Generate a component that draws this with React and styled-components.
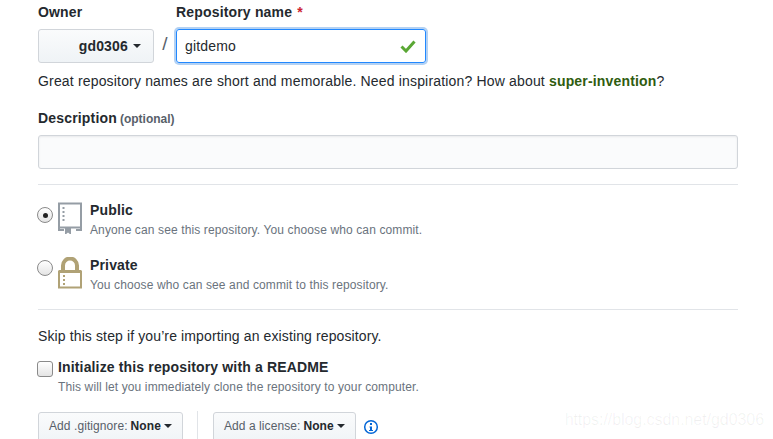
import React from "react"
import styled, { createGlobalStyle } from "styled-components"

const Global = createGlobalStyle`
html, body { margin: 0; padding: 0; background: #fff; overflow: hidden; }
body { font-family: "Liberation Sans", Arial, sans-serif; font-size: 14px; color: #24292e; letter-spacing: 0.17px; }
`
const Page = styled.div`
position: relative;
width: 773px;
height: 439px;
overflow: hidden;
box-sizing: border-box;
padding: 4px 35px 0 38px;
`
const OwnerRow = styled.div`
display: flex;
align-items: flex-start;
`
const Field = styled.div`
display: flex;
flex-direction: column;
gap: 8px;
`
const Label = styled.label`
font-weight: 700;
font-size: 14px;
line-height: 17px;
color: #24292e;
small { font-size: 12px; color: #586069; letter-spacing: 0; margin-left: -1px; }
`
const Star = styled.span`
color: #cb2431;
margin-left: 1px;
`
const OwnerButton = styled.div`
box-sizing: border-box;
width: 116px;
height: 34px;
display: flex;
align-items: center;
justify-content: flex-end;
padding-right: 12px;
gap: 5px;
font-weight: 700;
border: 1px solid #d1d5da;
border-radius: 3px;
background: linear-gradient(#fafbfc, #eff3f6);
`
const Caret = styled.span`
display: inline-block;
width: 0;
height: 0;
border: 4px solid transparent;
border-top-color: #24292e;
border-bottom: 0;
`
const Slash = styled.span`
width: 22px;
text-align: center;
font-size: 19px;
line-height: 29px;
margin-top: 25px;
color: #586069;
font-weight: 400;
`
const NameInput = styled.div`
box-sizing: border-box;
width: 250px;
height: 34px;
display: flex;
align-items: center;
justify-content: space-between;
padding: 0 9px 0 8px;
border: 1px solid #2188ff;
border-radius: 3px;
box-shadow: 0 0 0 2px rgba(3, 102, 214, 0.3);
font-size: 14px;
color: #24292e;
`
const Hint = styled.p`
margin: 10px 0 0;
line-height: 17px;
strong { color: #2f5c0f; }
`
const DescriptionLabel = styled(Label)`
display: block;
margin-top: 20px;
`
const DescriptionInput = styled.div`
box-sizing: border-box;
height: 34px;
margin-top: 7px;
border: 1px solid #d1d5da;
border-radius: 3px;
background: #fafbfc;
box-shadow: inset 0 1px 2px rgba(27, 31, 35, 0.075);
`
const Rule = styled.hr`
border: 0;
border-top: 1px solid #e1e4e8;
margin: ${p => p.$top}px 0 0;
`
const Option = styled.div`
display: flex;
align-items: flex-start;
margin-top: ${p => p.$top}px;
`
const Radio = styled.span`
box-sizing: border-box;
width: 16px;
height: 16px;
margin: ${p => p.$offset}px 5px 0 -1px;
border: 1px solid #8a8a8a;
border-radius: 50%;
background: linear-gradient(#fff, #e4e4e4);
display: flex;
align-items: center;
justify-content: center;
flex: none;
&::after {
  content: "";
  display: ${p => (p.$checked ? "block" : "none")};
  width: 5px;
  height: 5px;
  border-radius: 50%;
  background: #222;
}
`
const OptionIcon = styled.svg`
width: 24px;
height: 32px;
margin: 0 8px 0 0;
flex: none;
`
const OptionText = styled.div`
display: flex;
flex-direction: column;
`
const OptionTitle = styled.span`
font-weight: 700;
font-size: 14px;
line-height: 17px;
letter-spacing: 0.15px;
`
const Note = styled.span`
font-size: 12px;
line-height: 15px;
color: #6a737d;
margin-top: 4px;
letter-spacing: 0.12px;
`
const Skip = styled.p`
margin: 18px 0 0;
line-height: 17px;
letter-spacing: 0.12px;
`
const CheckRow = styled.div`
display: flex;
align-items: flex-start;
margin-top: 14px;
`
const Checkbox = styled.span`
box-sizing: border-box;
width: 16px;
height: 16px;
margin: 2px 5px 0 -1px;
border: 1px solid #8a8a8a;
border-radius: 3px;
background: linear-gradient(#fff, #e4e4e4);
flex: none;
`
const Buttons = styled.div`
display: flex;
align-items: flex-start;
margin-top: 17px;
`
const SelectButton = styled.div`
box-sizing: border-box;
height: 34px;
display: flex;
align-items: center;
gap: 3px;
padding: 0 10px 6px 10px;
font-size: 12px;
letter-spacing: 0.08px;
color: #586069;
white-space: nowrap;
border: 1px solid #d1d5da;
border-radius: 3px;
background: linear-gradient(#fafbfc, #eff3f6);
b { color: #24292e; }
`
const Divider = styled.span`
width: 1px;
height: 34px;
background: #e1e4e8;
margin: -1px 15px 0 14px;
`
const InfoIcon = styled.svg`
width: 16px;
height: 16px;
margin: 7px 0 0 7px;
`
const Watermark = styled.div`
position: absolute;
right: 9px;
top: 411px;
font-size: 16px;
letter-spacing: -0.06px;
color: rgba(0, 0, 0, 0.06);
white-space: nowrap;
`

export default function App() {
    return (<>
        <Global />
        <Page>
            <OwnerRow>
                <Field>
                    <Label>Owner</Label>
                    <OwnerButton>gd0306 <Caret /></OwnerButton>
                </Field>
                <Slash>/</Slash>
                <Field>
                    <Label>Repository name <Star>*</Star></Label>
                    <NameInput>
                        gitdemo
                        <svg width="16" height="14" viewBox="0 0 16 14">
                            <path d="M1.5 7.5 L6 12 L14.5 2.5" fill="none" stroke="#5aa734" strokeWidth="3" />
                        </svg>
                    </NameInput>
                </Field>
            </OwnerRow>
            <Hint>Great repository names are short and memorable. Need inspiration? How about <strong>super-invention</strong>?</Hint>
            <DescriptionLabel>Description <small>(optional)</small></DescriptionLabel>
            <DescriptionInput />
            <Rule $top={15} />
            <Option $top={17}>
                <Radio $checked $offset={5} />
                <OptionIcon viewBox="0 0 24 32">
                    <path d="M1 1.5h22v24H1z M1 25.5v2.5h5 M18 28h5v-2.5" fill="none" stroke="#959da5" strokeWidth="2" />
                    <path d="M7 26h6v7l-3-2.5L7 33z" fill="#959da5" />
                    <path d="M5.500 5v2M5.500 9v2M5.500 13v2M5.500 17v2" stroke="#959da5" strokeWidth="2" />
                </OptionIcon>
                <OptionText>
                    <OptionTitle>Public</OptionTitle>
                    <Note>Anyone can see this repository. You choose who can commit.</Note>
                </OptionText>
            </Option>
            <Option $top={19}>
                <Radio $offset={3} />
                <OptionIcon viewBox="0 0 24 32">
                    <path d="M5 14V8.500a7 7 0 0 1 14 0V14" fill="none" stroke="#b0a276" strokeWidth="4" />
                    <path d="M1 14.500h22v16H1z" fill="none" stroke="#b0a276" strokeWidth="2" />
                    <path d="M1 13h22v3H1z" fill="#b0a276" />
                    <path d="M6 18v2M6 22v2M6 26v2" stroke="#b0a276" strokeWidth="2" />
                </OptionIcon>
                <OptionText>
                    <OptionTitle>Private</OptionTitle>
                    <Note>You choose who can see and commit to this repository.</Note>
                </OptionText>
            </Option>
            <Rule $top={16} />
            <Skip>Skip this step if you’re importing an existing repository.</Skip>
            <CheckRow>
                <Checkbox />
                <OptionText>
                    <OptionTitle>Initialize this repository with a README</OptionTitle>
                    <Note>This will let you immediately clone the repository to your computer.</Note>
                </OptionText>
            </CheckRow>
            <Buttons>
                <SelectButton>Add .gitignore: <b>None</b> <Caret /></SelectButton>
                <Divider />
                <SelectButton>Add a license: <b>None</b> <Caret /></SelectButton>
                <InfoIcon viewBox="0 0 16 16">
                    <circle cx="8" cy="8" r="6.300" fill="none" stroke="#0366d6" strokeWidth="1.500" />
                    <path d="M7 4h2v2H7z M6.500 7.500H9V11h1v1H6v-1h1V8.500h-.5z" fill="#0366d6" />
                </InfoIcon>
            </Buttons>
            <Watermark>https://blog.csdn.net/gd0306</Watermark>
        </Page>
    </>)
}
